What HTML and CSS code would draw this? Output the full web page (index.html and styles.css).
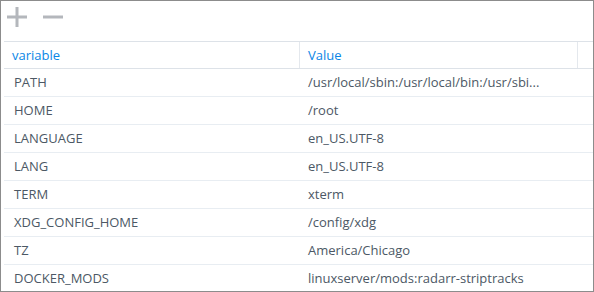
FILE: index.html
```html
<!DOCTYPE html>
<html lang="en">
<head>
    <meta charset="UTF-8">
    <title>Environment</title>
    <link rel="stylesheet" href="styles.css">
</head>
<body>
    <div class="panel">
        <div class="toolbar">
            <button class="tool" title="Add">
                <svg width="20" height="20" viewBox="0 0 20 20"><path d="M10 0V20M0 10H20" stroke="#b4b7bc" stroke-width="3"/></svg>
            </button>
            <button class="tool" title="Remove">
                <svg width="20" height="20" viewBox="0 0 20 20"><path d="M0 10H20" stroke="#b4b7bc" stroke-width="3"/></svg>
            </button>
        </div>

        <div class="grid">
            <div class="head">
                <div class="hcell">variable</div>
                <div class="hcell">Value</div>
                <div class="hcell"></div>
            </div>
            <div class="row"><div class="cell">PATH</div><div class="cell">/usr/local/sbin:/usr/local/bin:/usr/sbi...</div></div>
            <div class="row"><div class="cell">HOME</div><div class="cell">/root</div></div>
            <div class="row"><div class="cell">LANGUAGE</div><div class="cell">en_US.UTF-8</div></div>
            <div class="row"><div class="cell">LANG</div><div class="cell">en_US.UTF-8</div></div>
            <div class="row"><div class="cell">TERM</div><div class="cell">xterm</div></div>
            <div class="row"><div class="cell">XDG_CONFIG_HOME</div><div class="cell">/config/xdg</div></div>
            <div class="row"><div class="cell">TZ</div><div class="cell">America/Chicago</div></div>
            <div class="row"><div class="cell">DOCKER_MODS</div><div class="cell">linuxserver/mods:radarr-striptracks</div></div>
        </div>
    </div>
</body>
</html>
```

FILE: styles.css
```css
body {
    margin: 0;
    font-family: "Open Sans", "Noto Sans", sans-serif;
    font-size: 13px;
    color: #4c5865;
}

.panel {
    width: 594px;
    height: 292px;
    box-sizing: border-box;
    border: 1px solid #8c8c8c;
    background-color: #fff;
    overflow: hidden;
}

.toolbar {
    height: 40px;
    display: flex;
    align-items: flex-start;
    padding: 6px 0 0 6px;
    box-sizing: border-box;
    gap: 16px;
}

.tool {
    border: none;
    background: none;
    padding: 0;
    width: 20px;
    height: 20px;
    cursor: pointer;
}

.tool svg {
    display: block;
}

.grid {
    margin-left: 3px;
}

.head,
.row {
    display: grid;
    grid-template-columns: 296px 278px 1fr;
}

.head {
    border-top: 1px solid #dde2e8;
    border-bottom: 1px solid #dde2e8;
    height: 26px;
}

.hcell {
    color: #0a86e6;
    line-height: 26px;
    padding-left: 8px;
    border-right: 1px solid #e4e8ed;
}

.hcell:last-child {
    border-right: none;
}

.row {
    grid-template-columns: 296px 1fr;
    height: 27px;
    border-bottom: 1px solid #e8edf2;
}

.cell {
    line-height: 27px;
    padding-left: 10px;
    white-space: nowrap;
}

.cell + .cell {
    padding-left: 8px;
}
```
